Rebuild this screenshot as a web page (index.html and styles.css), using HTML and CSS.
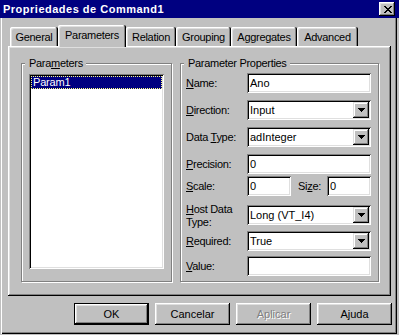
FILE: index.html
```html
<!DOCTYPE html>
<html lang="pt">
<head>
    <meta charset="UTF-8">
    <title>Propriedades de Command1</title>
    <link rel="stylesheet" href="styles.css">
</head>
<body>
    <div class="window">
        <div class="titlebar">
            <span class="title">Propriedades de Command1</span>
            <span class="close">
                <svg width="8" height="7" viewBox="0 0 8 7" shape-rendering="crispEdges">
                    <path d="M0 0h2v1h-2zM6 0h2v1h-2zM1 1h2v1h-2zM5 1h2v1h-2zM2 2h4v1h-4zM3 3h2v1h-2zM2 4h4v1h-4zM1 5h2v1h-2zM5 5h2v1h-2zM0 6h2v1h-2zM6 6h2v1h-2z" fill="#000"/>
                </svg>
            </span>
        </div>

        <div class="tabs">
            <div class="tab tab-general">General</div>
            <div class="tab tab-params active">Parameters</div>
            <div class="tab tab-relation">Relation</div>
            <div class="tab tab-grouping">Grouping</div>
            <div class="tab tab-aggregates">Aggregates</div>
            <div class="tab tab-advanced">Advanced</div>
        </div>

        <div class="panel">
            <div class="group group-list">
                <span class="legend">Para<u>m</u>eters</span>
                <div class="listbox">
                    <div class="item selected">Param1</div>
                </div>
            </div>

            <div class="group group-props">
                <span class="legend">Parameter Properties</span>
                <div class="form">
                    <label class="lbl"><u>N</u>ame:</label>
                    <div class="edit">Ano</div>

                    <label class="lbl"><u>D</u>irection:</label>
                    <div class="combo"><span class="value">Input</span><span class="arrow"><svg width="7" height="4" viewBox="0 0 7 4" shape-rendering="crispEdges"><path d="M0 0h7v1h-1v1h-1v1h-1v1h-1v-1h-1v-1h-1v-1h-1z" fill="#000"/></svg></span></div>

                    <label class="lbl">Data <u>T</u>ype:</label>
                    <div class="combo"><span class="value">adInteger</span><span class="arrow"><svg width="7" height="4" viewBox="0 0 7 4" shape-rendering="crispEdges"><path d="M0 0h7v1h-1v1h-1v1h-1v1h-1v-1h-1v-1h-1v-1h-1z" fill="#000"/></svg></span></div>

                    <label class="lbl"><u>P</u>recision:</label>
                    <div class="edit">0</div>

                    <label class="lbl"><u>S</u>cale:</label>
                    <div class="pair">
                        <div class="edit short">0</div>
                        <label class="lbl size-lbl">Si<u>z</u>e:</label>
                        <div class="edit short">0</div>
                    </div>

                    <label class="lbl two-lines"><u>H</u>ost Data<br>Type:</label>
                    <div class="combo"><span class="value">Long (VT_I4)</span><span class="arrow"><svg width="7" height="4" viewBox="0 0 7 4" shape-rendering="crispEdges"><path d="M0 0h7v1h-1v1h-1v1h-1v1h-1v-1h-1v-1h-1v-1h-1z" fill="#000"/></svg></span></div>

                    <label class="lbl"><u>R</u>equired:</label>
                    <div class="combo"><span class="value">True</span><span class="arrow"><svg width="7" height="4" viewBox="0 0 7 4" shape-rendering="crispEdges"><path d="M0 0h7v1h-1v1h-1v1h-1v1h-1v-1h-1v-1h-1v-1h-1z" fill="#000"/></svg></span></div>

                    <label class="lbl"><u>V</u>alue:</label>
                    <div class="edit"></div>
                </div>
            </div>
        </div>

        <div class="buttons">
            <div class="btn default">OK</div>
            <div class="btn">Cancelar</div>
            <div class="btn disabled">Aplicar</div>
            <div class="btn">Ajuda</div>
        </div>
    </div>
</body>
</html>
```

FILE: styles.css
```css
* {
    box-sizing: border-box;
}

body {
    margin: 0;
    background: #c0c0c0;
    font-family: "Liberation Sans", Arial, sans-serif;
    font-size: 11px;
    line-height: 13px;
    color: #000;
}

.window {
    width: 397px;
    height: 334px;
    box-shadow: inset 1px 0 #c0c0c0, inset 2px 0 #fff, inset -1px -1px #000, inset -2px -2px #808080;
}

.titlebar {
    width: 399px;
    height: 18px;
    padding: 0 4px 0 3px;
    display: flex;
    align-items: center;
    justify-content: space-between;
    background: #000080;
    color: #fff;
}

.title {
    font-weight: bold;
    letter-spacing: 0.5px;
}

.close {
    width: 16px;
    height: 14px;
    display: flex;
    align-items: center;
    justify-content: center;
    padding-left: 1px;
    background: #c0c0c0;
    box-shadow: inset -1px -1px #000, inset 1px 1px #fff, inset -2px -2px #808080, inset 2px 2px #dfdfdf;
}

.close svg {
    display: block;
}

/* tab strip */
.tabs {
    display: flex;
    align-items: flex-end;
    height: 21px;
    margin: 7px 0 0 10px;
}

.tab {
    height: 19px;
    padding-top: 4px;
    text-align: center;
    letter-spacing: -0.3px;
    border-radius: 2px 2px 0 0;
    box-shadow: inset -1px 0 #000, inset 1px 1px #fff, inset -2px 0 #808080, inset 2px 2px #dfdfdf;
}

.tab.active {
    position: relative;
    z-index: 1;
    height: 22px;
    margin-bottom: -1px;
    padding-top: 4px;
    background: #c0c0c0;
}

.tab-general { width: 48px; }
.tab-params { width: 68px; }
.tab-relation { width: 50px; }
.tab-grouping { width: 55px; }
.tab-aggregates { width: 66px; }
.tab-advanced { width: 61px; }

.panel {
    width: 383px;
    height: 250px;
    margin-left: 8px;
    padding: 17px 0 0 13px;
    display: flex;
    gap: 8px;
    box-shadow: inset -1px -1px #000, inset 1px 1px #fff, inset -2px -2px #808080, inset 2px 2px #dfdfdf;
}

/* etched group boxes */
.group {
    position: relative;
    height: 219px;
    border: 1px solid #808080;
    box-shadow: inset 1px 1px #fff, 1px 1px #fff;
}

.group-list { width: 151px; }
.group-props { width: 199px; }

.legend {
    position: absolute;
    top: -7px;
    left: 3px;
    padding: 0 3px 0 4px;
    background: #c0c0c0;
    letter-spacing: -0.3px;
}

.listbox {
    width: 135px;
    height: 195px;
    margin: 10px 0 0 7px;
    padding: 2px;
    background: #fff;
    box-shadow: inset 1px 1px #808080, inset -1px -1px #fff, inset 2px 2px #000, inset -2px -2px #dfdfdf;
}

.item {
    height: 13px;
    padding-left: 2px;
    letter-spacing: -0.2px;
}

.item.selected {
    background: #000080;
    color: #fff;
    outline: 1px dotted #ffff80;
    outline-offset: -1px;
}

/* property form */
.form {
    display: grid;
    grid-template-columns: 61px 124px;
    grid-template-rows: 27px 27px 27px 22px 29px 26px 25px 20px;
    margin: 9px 0 0 5px;
}

.lbl {
    height: 20px;
    line-height: 20px;
    letter-spacing: -0.3px;
}

.lbl.two-lines {
    height: auto;
    line-height: 13px;
    margin-top: -2px;
}

.edit,
.combo {
    height: 20px;
    line-height: 16px;
    padding: 2px 3px;
    background: #fff;
    box-shadow: inset 1px 1px #808080, inset -1px -1px #fff, inset 2px 2px #000, inset -2px -2px #dfdfdf;
}

.combo {
    display: flex;
    padding-right: 2px;
}

.combo .value {
    flex: 1;
}

.arrow {
    width: 16px;
    height: 16px;
    display: flex;
    align-items: center;
    justify-content: center;
    background: #c0c0c0;
    box-shadow: inset -1px -1px #000, inset 1px 1px #dfdfdf, inset -2px -2px #808080, inset 2px 2px #fff;
}

.arrow svg {
    display: block;
}

.pair {
    display: flex;
}

.edit.short {
    width: 44px;
}

.size-lbl {
    margin: 0 auto 0 7px;
}

/* dialog buttons */
.buttons {
    display: flex;
    justify-content: flex-end;
    gap: 6px;
    margin-top: 7px;
    padding-right: 5px;
}

.btn {
    width: 75px;
    height: 22px;
    line-height: 22px;
    text-align: center;
    box-shadow: inset -1px -1px #000, inset 1px 1px #fff, inset -2px -2px #808080, inset 2px 2px #dfdfdf;
}

.btn.default {
    box-shadow: inset 0 0 0 1px #000, inset -2px -2px #000, inset 2px 2px #fff, inset -3px -3px #808080, inset 3px 3px #dfdfdf;
}

.btn.disabled {
    color: #808080;
    text-shadow: 1px 1px #fff;
}
```
